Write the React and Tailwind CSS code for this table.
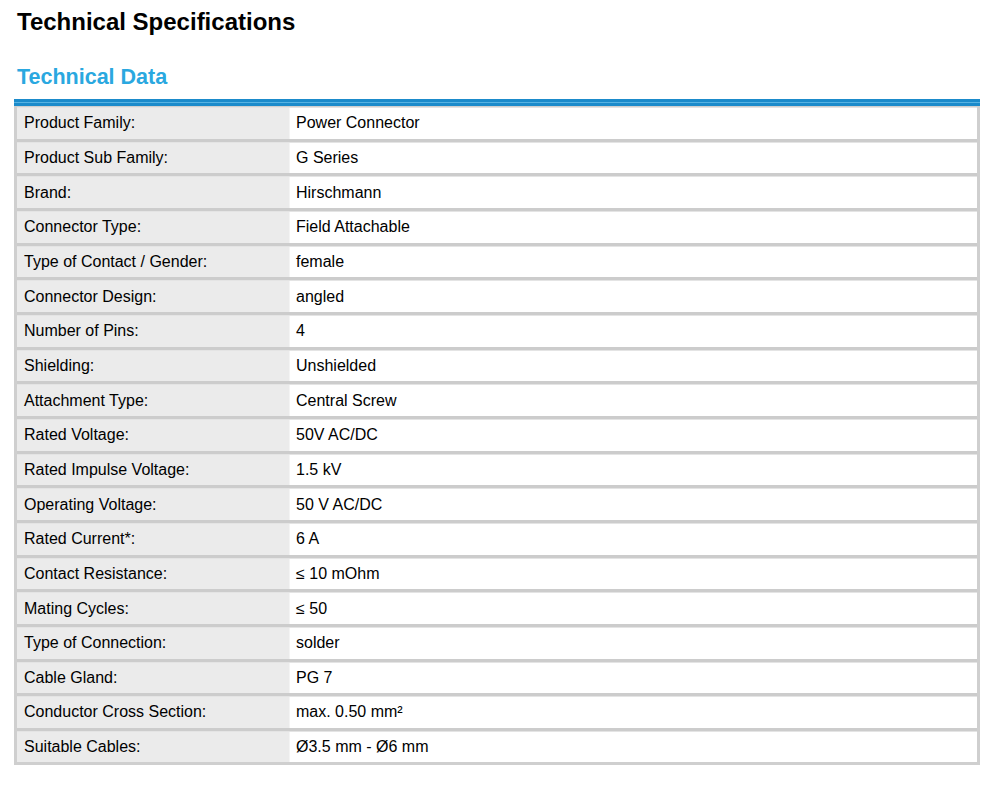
const specs = [
  ['Product Family:', 'Power Connector'],
  ['Product Sub Family:', 'G Series'],
  ['Brand:', 'Hirschmann'],
  ['Connector Type:', 'Field Attachable'],
  ['Type of Contact / Gender:', 'female'],
  ['Connector Design:', 'angled'],
  ['Number of Pins:', '4'],
  ['Shielding:', 'Unshielded'],
  ['Attachment Type:', 'Central Screw'],
  ['Rated Voltage:', '50V AC/DC'],
  ['Rated Impulse Voltage:', '1.5 kV'],
  ['Operating Voltage:', '50 V AC/DC'],
  ['Rated Current*:', '6 A'],
  ['Contact Resistance:', '≤ 10 mOhm'],
  ['Mating Cycles:', '≤ 50'],
  ['Type of Connection:', 'solder'],
  ['Cable Gland:', 'PG 7'],
  ['Conductor Cross Section:', 'max. 0.50 mm²'],
  ['Suitable Cables:', 'Ø3.5 mm - Ø6 mm'],
];

export default function App() {
  return (
    <div className="w-[1002px] h-[791px] bg-white text-black font-['Liberation_Sans',Arial,sans-serif] overflow-hidden">
      {/* Page heading */}
      <h1 className="pl-[17px] pt-[8px] text-[24px] leading-[28px] font-bold">Technical Specifications</h1>

      {/* Section heading */}
      <h2 className="pl-[17px] mt-[29px] text-[21.5px] leading-[24px] font-bold text-[#2aa8e0]">Technical Data</h2>

      {/* Spec table */}
      <div className="ml-[14px] mt-[10px] w-[966px]">
        <div className="flex flex-col">
          <div className="h-[3px] bg-[#1b8bcb]" />
          <div className="h-[1px] bg-[#56b3e3]" />
          <div className="h-[3px] bg-[#1b8bcb]" />
        </div>
        <div className="border-x-[3px] border-b-[3px] border-[#cfcfcf]">
          {specs.map(([label, value], i) => (
            <div key={label}>
              <div className={i === 0 ? 'h-[1px] bg-[#cfcfcf]' : 'h-[3px] bg-[#cccccc]'} />
              <div className="flex h-[31.67px] border-t border-[#e4e4e4]">
                <div className="w-[273px] shrink-0 bg-[#ebebeb] pl-[7px] flex items-center text-[16px] border-r border-[#f4f4f4]">
                  {label}
                </div>
                <div className="flex-1 bg-white pl-[6px] flex items-center text-[16px]">
                  {value}
                </div>
              </div>
            </div>
          ))}
        </div>
      </div>
    </div>
  );
}
